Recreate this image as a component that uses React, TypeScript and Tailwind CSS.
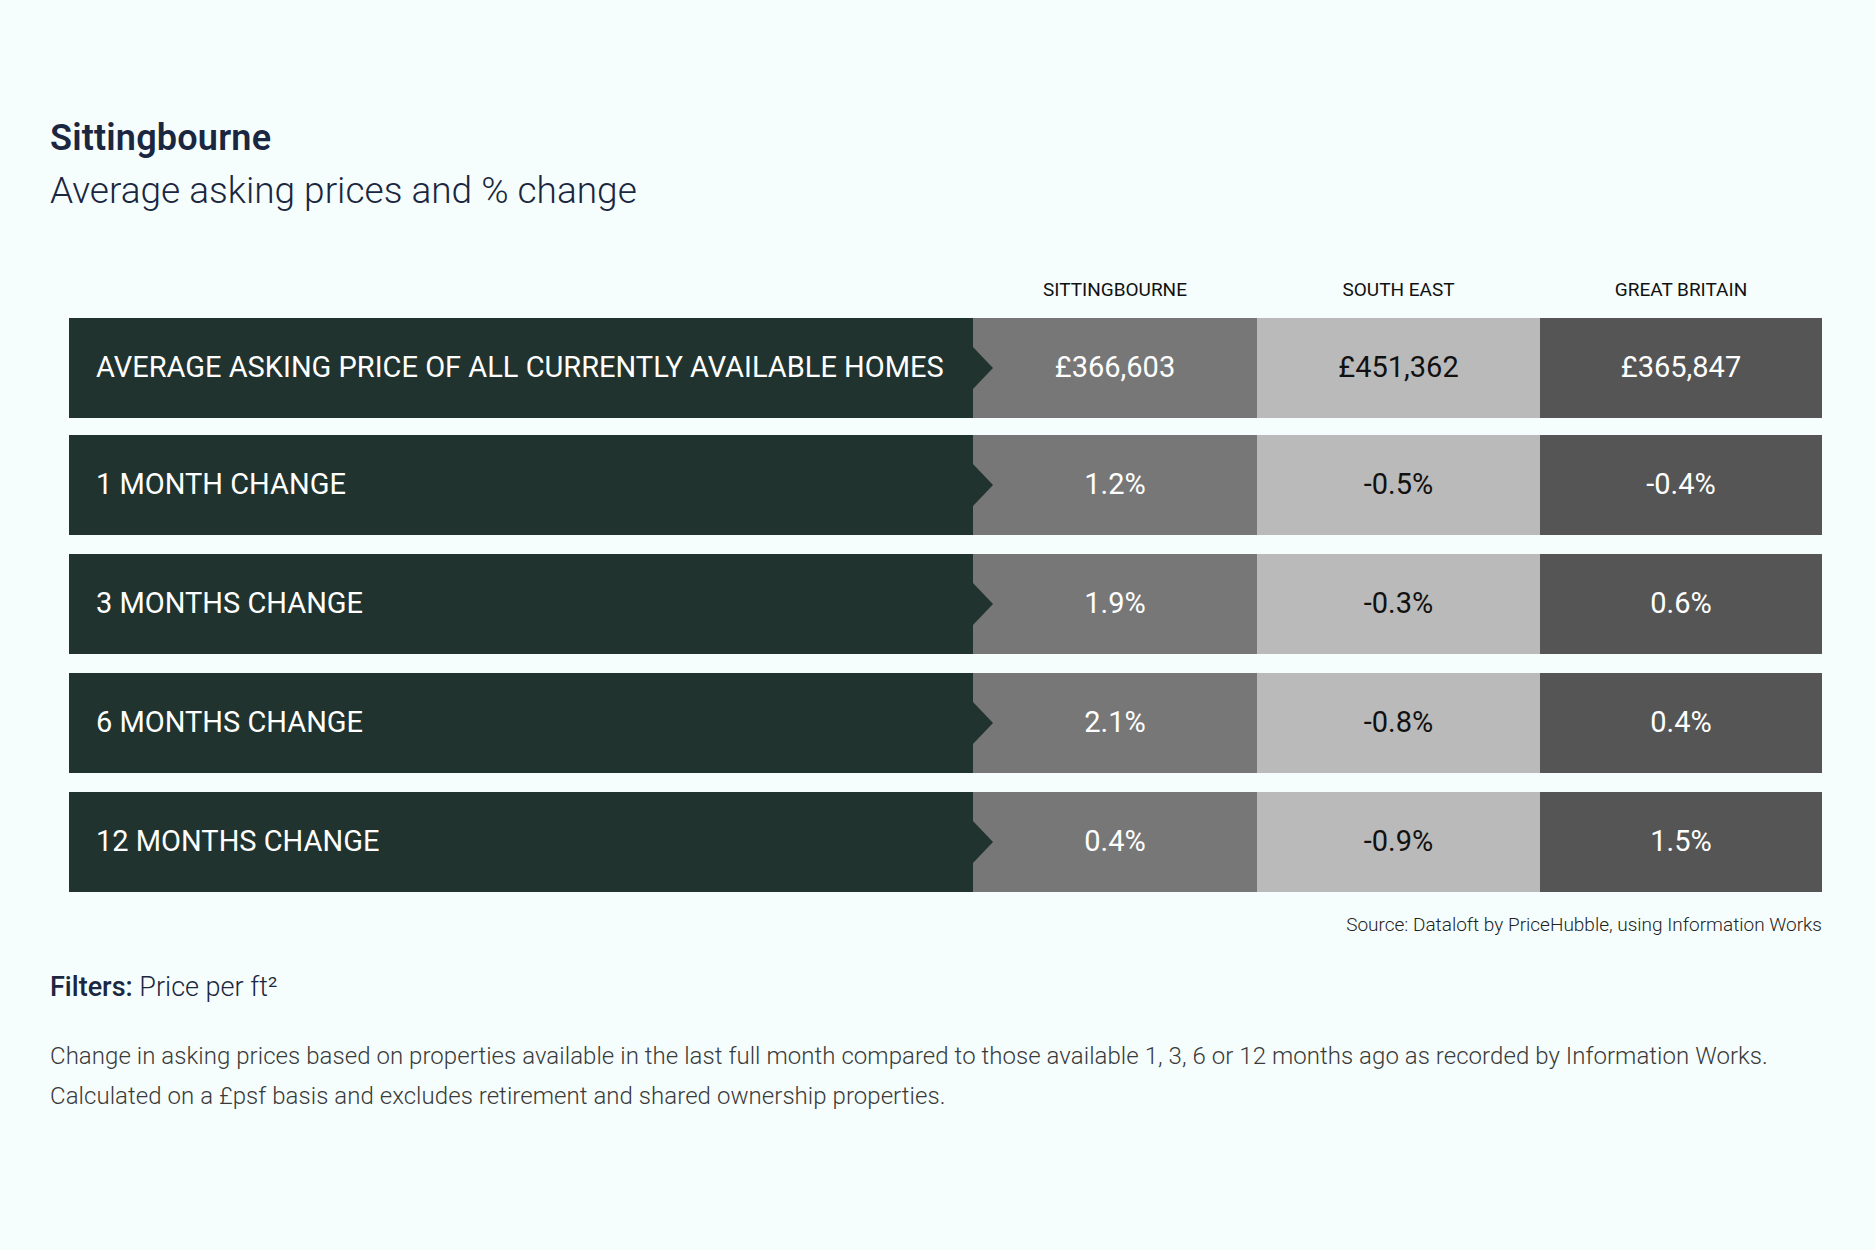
const rows = [
  { label: 'AVERAGE ASKING PRICE OF ALL CURRENTLY AVAILABLE HOMES', values: ['£366,603', '£451,362', '£365,847'] },
  { label: '1 MONTH CHANGE', values: ['1.2%', '-0.5%', '-0.4%'] },
  { label: '3 MONTHS CHANGE', values: ['1.9%', '-0.3%', '0.6%'] },
  { label: '6 MONTHS CHANGE', values: ['2.1%', '-0.8%', '0.4%'] },
  { label: '12 MONTHS CHANGE', values: ['0.4%', '-0.9%', '1.5%'] },
];

const columns = ['SITTINGBOURNE', 'SOUTH EAST', 'GREAT BRITAIN'];

export default function App() {
  return (
    <div className="min-h-screen bg-[#f5fefd] font-['Roboto',sans-serif] text-[#1b2640] pl-[50px] pr-[53px] pt-[118px]">
      <h1 className="text-[36px] leading-[40px] font-semibold tracking-[0.2px]">Sittingbourne</h1>
      <h2 className="text-[37px] leading-[40px] font-light mt-[13px]">Average asking prices and % change</h2>

      {/* Table */}
      <div className="ml-[19px] mt-[64px]">
        <div className="grid grid-cols-[904px_284px_283px_282px] h-[30px] items-center text-[19px] text-[#111]">
          <div />
          {columns.map((c) => (
            <div key={c} className="text-center">{c}</div>
          ))}
        </div>

        <div className="flex flex-col gap-[19px] mt-[13px]">
          {rows.map((row, i) => (
            <div
              key={row.label}
              className={`grid grid-cols-[904px_284px_283px_282px] h-[100px] text-[29px] ${i === 1 ? '-mt-[2px]' : ''}`}
            >
              <div className="relative bg-[#21332e] flex items-center pl-[27px] text-white">
                {row.label}
                <div className="absolute left-full top-1/2 -translate-y-1/2 z-10 w-0 h-0 border-y-[21px] border-y-transparent border-l-[20px] border-l-[#21332e]" />
              </div>
              <div className="bg-[#777777] flex items-center justify-center text-white">{row.values[0]}</div>
              <div className="bg-[#bababa] flex items-center justify-center text-[#111]">{row.values[1]}</div>
              <div className="bg-[#555555] flex items-center justify-center text-white">{row.values[2]}</div>
            </div>
          ))}
        </div>

        <div className="text-right text-[19px] font-light text-[#222] mt-[19px]">
          Source: Dataloft by PriceHubble, using Information Works
        </div>
      </div>

      <div className="mt-[32px] text-[27px] leading-[30px]">
        <span className="font-medium">Filters:</span> <span className="font-light">Price per ft²</span>
      </div>

      <p className="mt-[34px] text-[24px] leading-[40px] font-light tracking-[0.05px] text-[#3a3a3a]">
        Change in asking prices based on properties available in the last full month compared to those available 1, 3, 6 or 12 months ago as recorded by Information Works.
        <br />
        Calculated on a £psf basis and excludes retirement and shared ownership properties.
      </p>
    </div>
  );
}
